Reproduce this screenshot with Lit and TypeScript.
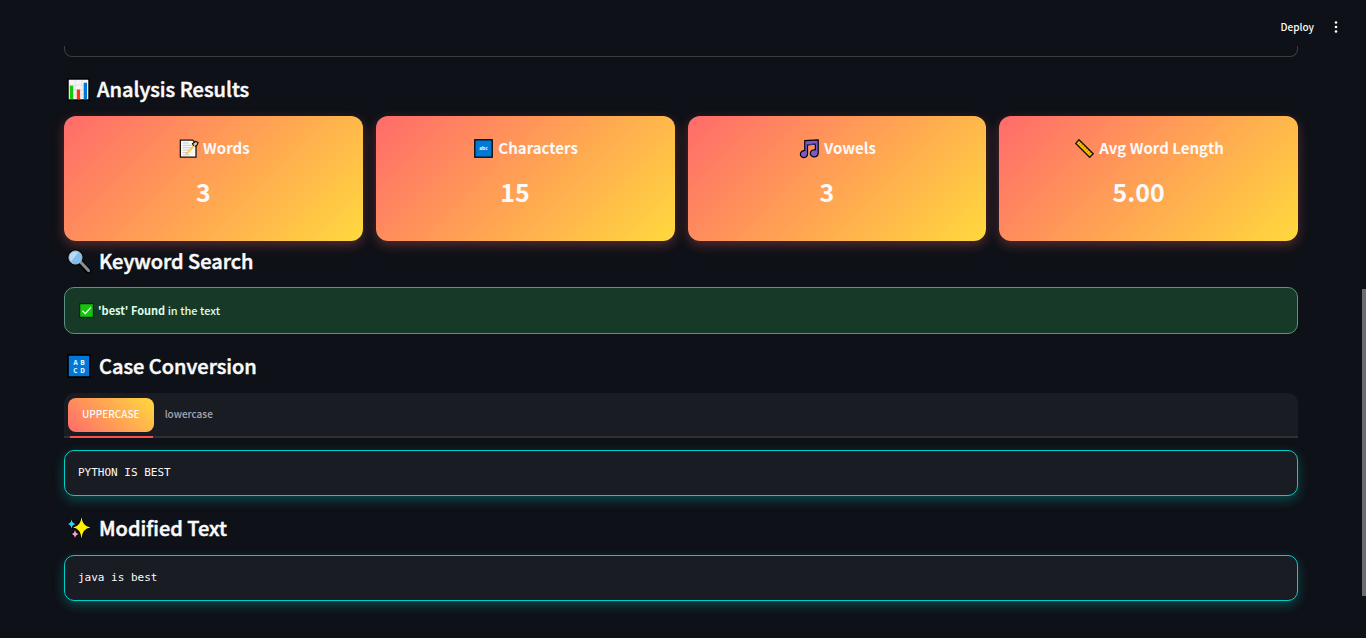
import { LitElement, html, svg, css } from "lit";
import { customElement, property, state } from "lit/decorators.js";

const ICONS: Record<string, unknown> = {
  chart: svg`<rect x="1" y="1" width="22" height="22" fill="#f6f4f8" stroke="#000" stroke-width="1.6"/>
    <path d="M2 7.5h20M2 12.500h20M2 17.500h20M8.500 2v20M15.500 2v20" stroke="#d9d9df" stroke-width=".7"/>
    <path d="M3 8h3.500v14H3z" fill="#16c60c"/><path d="M10.200 12h3.500v10h-3.500z" fill="#f03a17"/><path d="M17.400 5h3.500v17h-3.500z" fill="#0078d7"/>`,
  memo: svg`<path d="M1.700 1.300h15.500l4.300 4.500v17H1.700z" fill="#fafafa" stroke="#17130c" stroke-width="1.6"/>
    <path d="M4.500 5h8M4.500 8h13M4.500 11h11M4.500 14h10M4.500 17h6M4.500 20h9" stroke="#bcbcc0" stroke-width="1"/>
    <path d="M9 19.500 20 7.500" stroke="#ffc83d" stroke-width="2.200"/><path d="M18.500 8.500 17 6l4-3 3 1.500-1 3-3 2" fill="#ccb" stroke="#17130c" stroke-width="1.500"/>`,
  abc: svg`<rect x="1" y="1" width="22" height="22" fill="#0078d7" stroke="#000" stroke-width="1.6"/>
    <text x="12" y="14" text-anchor="middle" font-size="6" font-weight="700" fill="#fff">abc</text>`,
  notes: svg`<path d="M6 2 23 1v17a5 4.500 0 1 1-3.600-4.200V6.500L9.500 7.500V19A4.500 4.500 0 1 1 6 14.700z" fill="#7a5bc7" stroke="#000" stroke-width="1.500" stroke-linejoin="round"/>
    <path d="M6.500 7.700 22 6.200" stroke="#5544a0" stroke-width="1"/>`,
  ruler: svg`<path d="M5 1 23 18.500 18.500 23 1 5.500z" fill="#ffb900" stroke="#17130c" stroke-width="1.700"/>
    <path d="m7.500 4-2 2m4.500.5-2 2m4.500.5-2 2m4.500.5-2 2m4.500.5-2 2m4.500.5-2 2" stroke="#6b4c00" stroke-width=".8"/>`,
  search: svg`<path d="m14 14 7.500 8" stroke="#000" stroke-width="5.500" stroke-linecap="round"/>
    <circle cx="8.500" cy="8.500" r="8" fill="#000"/><path d="m14 13.500 7.500 8" stroke="#888d94" stroke-width="3.200" stroke-linecap="round"/>
    <circle cx="8.500" cy="8.500" r="6.600" fill="#83beec" stroke="#a9adb5" stroke-width="1"/><path d="M2.500 8.500a6 6 0 0 1 9-5.200L4 12.500a6 6 0 0 1-1.500-4z" fill="#b9dcf5"/>`,
  check: svg`<rect x="1" y="1" width="22" height="22" fill="#16c60c" stroke="#052e08" stroke-width="2"/>
    <path d="m5.500 12.500 4.500 4.500 9-10" fill="none" stroke="#fff" stroke-width="2"/>`,
  letters: svg`<rect x="1" y="1" width="22" height="22" fill="#0078d7" stroke="#000" stroke-width="1.6"/>
    <g font-size="6.500" font-weight="700" fill="#fff" text-anchor="middle"><text x="8.500" y="10.500">A</text><text x="15.500" y="10.500">B</text><text x="8.500" y="19">C</text><text x="15.500" y="19">D</text></g>`,
  sparkles: svg`<g stroke="#000" stroke-width="1.700" paint-order="stroke"><path d="M14.500 1Q15.500 10.500 23.500 11.500 15.500 12.500 14.500 22.500 13.500 12.500 6 11.500 13.500 10.500 14.500 1z" fill="#fff100"/>
    <path d="M4.500 3Q5 7.500 9 8 5 8.500 4.500 13 4 8.500 .5 8 4 7.500 4.500 3z" fill="#31d2f7"/>
    <path d="M8 13.500Q8.500 17.500 12 18 8.500 18.500 8 22.500 7.500 18.500 4.500 18 7.500 17.500 8 13.500z" fill="#f7a1c4"/></g>`,
};

@customElement("emoji-icon")
export class EmojiIcon extends LitElement {
  @property() name = "";
  static styles = css`
    :host { display: block; flex: none; width: 24px; height: 24px; }
    .glyph { display: block; width: 100%; height: 100%; overflow: visible; font-family: "Noto Sans CJK SC", sans-serif; }
  `;
  render() {
    return html`<svg class="glyph" viewBox="0 0 24 24" fill="none" aria-hidden="true">${ICONS[this.name]}</svg>`;
  }
}

@customElement("metric-card")
export class MetricCard extends LitElement {
  @property() icon = "";
  @property() label = "";
  @property() value = "";
  static styles = css`
    :host { display: block; flex: 1; min-width: 0; }
    .card {
      box-sizing: border-box; padding: 20px; border-radius: 12px; text-align: center; color: #fafafa;
      background: linear-gradient(135deg, #ff6b6b, #ffd93d);
      box-shadow: 0 4px 12px rgba(255, 107, 107, 0.3);
    }
    .label { display: flex; align-items: center; justify-content: center; gap: 5px; margin: 0; padding-left: 2px; font-size: 15px; line-height: 24px; font-weight: 700; }
    .label emoji-icon { width: 19px; height: 19px; }
    .value { margin: 0; padding: 13px 20px 12px 0; font-size: 25px; line-height: 36px; font-weight: 700; }
  `;
  render() {
    return html`<article class="card">
      <h3 class="label"><emoji-icon name=${this.icon}></emoji-icon>${this.label}</h3>
      <p class="value">${this.value}</p>
    </article>`;
  }
}

@customElement("app-root")
export class AppRoot extends LitElement {
  @state() private tab = "upper";

  static styles = css`
    :host {
      display: block; position: relative; min-height: 100vh; overflow: hidden;
      background: #0e1117; color: #fafafa;
      font-family: "Noto Sans CJK SC", "Source Sans 3", sans-serif; font-size: 11px; line-height: 18px;
    }
    button { font: inherit; color: inherit; border: 0; background: none; padding: 0; cursor: pointer; }
    .topbar { display: flex; align-items: center; justify-content: flex-end; gap: 16px; height: 46px; padding: 8px 24px 0 0; box-sizing: border-box; }
    .deploy { font-size: 10px; font-weight: 500; }
    .menu { display: flex; justify-content: center; width: 12px; }
    .dots { width: 12px; height: 12px; fill: #fafafa; }
    main { padding: 0 68px 36px 64px; }
    .panel-end { height: 10px; border: 1px solid #3b3d42; border-top: 0; border-radius: 0 0 8px 8px; }
    .heading { display: flex; align-items: center; gap: 8px; margin: 0; padding-left: 3px; font-size: 20px; line-height: 32px; font-weight: 500; -webkit-text-stroke: 0.5px currentColor; }
    .results { padding: 16px 0 11px; }
    .results .heading { gap: 7px; }
    .results emoji-icon { width: 23px; height: 23px; }
    .cards { display: flex; gap: 13px; }
    .keyword { padding: 4px 0 10px; }
    .keyword emoji-icon, .case emoji-icon, .modified emoji-icon { -webkit-text-stroke: 0; }
    .alert { display: flex; align-items: center; gap: 4px; padding: 13px 14px; border: 1px solid #5b9283; border-radius: 10px; background: #173928; color: #dffde9; line-height: 19px; font-weight: 500; }
    .alert emoji-icon { width: 15px; height: 15px; }
    .alert p { margin: 0; }
    .alert strong { font-weight: 700; }
    .case { padding: 16px 0 11px; }
    .tabs { display: flex; gap: 11px; padding: 5px 4px 4px; border-bottom: 2px solid #303136; border-radius: 10px 10px 0 0; background: #1a1c24; }
    .tab { position: relative; height: 34px; padding-bottom: 2px; border-radius: 8px; color: #a3a8b4; font-size: 10px; font-weight: 500; }
    .tab.active { padding: 0 14px 2px; color: #fafafa; background: linear-gradient(45deg, #ff6b6b, #ffd93d); }
    .tab.active::after { content: ""; position: absolute; left: 2px; right: 1px; bottom: -6px; height: 2px; background: #ff4b4b; }
    .code { margin: 0; padding: 12px 13px; border: 1px solid #00cec9; border-radius: 10px; background: #1a1c24; box-shadow: 0 4px 12px rgba(0, 206, 201, 0.3); font-family: "DejaVu Sans Mono", monospace; font-size: 11px; line-height: 20px; }
    .panel { margin-top: 12px; }
    .modified { padding: 16px 0 11px; }
    .scroll { position: absolute; right: 0; top: 289px; width: 4px; height: 307px; background: #6b6c70; }
  `;

  private tabButton(id: string, label: string) {
    const on = this.tab === id;
    return html`<button class="tab ${on ? "active" : ""}" role="tab" aria-selected=${on} @click=${() => (this.tab = id)}>${label}</button>`;
  }

  render() {
    return html`
      <header class="topbar">
        <button class="deploy">Deploy</button>
        <button class="menu" aria-label="Main menu">
          <svg class="dots" viewBox="0 0 12 12"><circle cx="6" cy="1.500" r="1.300"/><circle cx="6" cy="6" r="1.300"/><circle cx="6" cy="10.500" r="1.300"/></svg>
        </button>
      </header>
      <main>
        <div class="panel-end"></div>
        <div class="results"><h2 class="heading"><emoji-icon name="chart"></emoji-icon>Analysis Results</h2></div>
        <section class="cards">
          <metric-card icon="memo" label="Words" value="3"></metric-card>
          <metric-card icon="abc" label="Characters" value="15"></metric-card>
          <metric-card icon="notes" label="Vowels" value="3"></metric-card>
          <metric-card icon="ruler" label="Avg Word Length" value="5.00"></metric-card>
        </section>
        <div class="keyword"><h2 class="heading"><emoji-icon name="search"></emoji-icon>Keyword Search</h2></div>
        <div class="alert" role="alert"><emoji-icon name="check"></emoji-icon><p><strong>'best' Found</strong> in the text</p></div>
        <div class="case"><h2 class="heading"><emoji-icon name="letters"></emoji-icon>Case Conversion</h2></div>
        <div class="tabs" role="tablist">${this.tabButton("upper", "UPPERCASE")}${this.tabButton("lower", "lowercase")}</div>
        <pre class="code panel" role="tabpanel">${this.tab === "upper" ? "PYTHON IS BEST" : "python is best"}</pre>
        <div class="modified"><h2 class="heading"><emoji-icon name="sparkles"></emoji-icon>Modified Text</h2></div>
        <pre class="code">java is best</pre>
      </main>
      <div class="scroll"></div>
    `;
  }
}
